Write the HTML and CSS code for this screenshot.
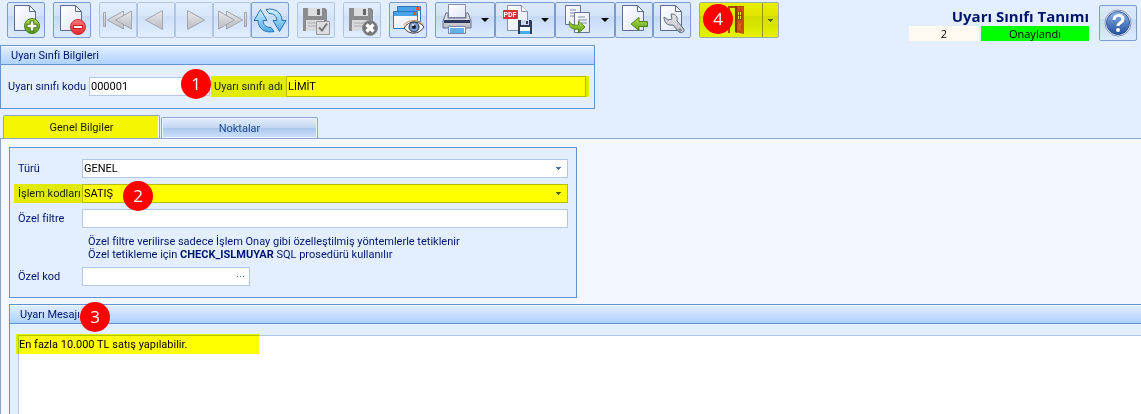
FILE: index.html
```html
<!DOCTYPE html>
<html lang="tr">
<head>
    <meta charset="UTF-8">
    <meta name="viewport" content="width=device-width, initial-scale=1.0">
    <title>Uyarı Sınıfı Tanımı</title>
    <link rel="stylesheet" href="styles.css">
</head>
<body>
    <!-- shared gradients and icon parts -->
    <svg class="defs" width="0" height="0" aria-hidden="true">
        <defs>
            <linearGradient id="paper" x1="0" y1="0" x2="1" y2="1"><stop offset="0" stop-color="#fff"/><stop offset="1" stop-color="#dfe6f6"/></linearGradient>
            <linearGradient id="green" x1="0" y1="0" x2="0" y2="1"><stop offset="0" stop-color="#b5e04a"/><stop offset="1" stop-color="#5b9a1c"/></linearGradient>
            <linearGradient id="red" x1="0" y1="0" x2="0" y2="1"><stop offset="0" stop-color="#ff7a7a"/><stop offset="1" stop-color="#e3262b"/></linearGradient>
            <linearGradient id="blue" x1="0" y1="0" x2="0" y2="1"><stop offset="0" stop-color="#d4f1ff"/><stop offset="1" stop-color="#4fabe6"/></linearGradient>
            <linearGradient id="grey" x1="0" y1="0" x2="0" y2="1"><stop offset="0" stop-color="#e8e9eb"/><stop offset="1" stop-color="#b9bcc2"/></linearGradient>
            <linearGradient id="navy" x1="0" y1="0" x2="0" y2="1"><stop offset="0" stop-color="#8fb4ea"/><stop offset="1" stop-color="#214f9e"/></linearGradient>
            <g id="page"><path d="M6.500 2.500h15l6 6v19h-21z" fill="url(#paper)" stroke="#5d6a92"/><path d="M21.500 2.500v6h6z" fill="#fff" stroke="#5d6a92"/></g>
            <g id="floppy"><path d="M5 5h22l2 2v21H5z" fill="#8b8c90"/><path d="M10 5h14v8H10z" fill="#dcdde0"/><path d="M19 6h3v6h-3z" fill="#66676b"/><path d="M8 17h18v11H8z" fill="#d9dadd"/><path d="M10 20h14M10 23h14" stroke="#aaacb0"/></g>
        </defs>
    </svg>

    <header class="toolbar">
        <div class="group">
            <button class="tool" aria-label="Yeni"><svg viewBox="0 0 36 34"><use href="#page"/><circle cx="24" cy="23" r="7.500" fill="url(#green)" stroke="#47791a"/><path d="M24 17.500v11M18.500 23h11" stroke="#3f7418" stroke-width="4.500"/><path d="M24 18.500v9M19.500 23h9" stroke="#fff" stroke-width="2.500"/></svg></button>
        </div>
        <div class="group">
            <button class="tool" aria-label="Sil"><svg viewBox="0 0 36 34"><use href="#page"/><circle cx="24" cy="24" r="7.500" fill="url(#red)" stroke="#c42d32"/><rect x="19.500" y="22.500" width="9" height="3" fill="#fff" stroke="#bd1f25"/></svg></button>
        </div>
        <div class="group">
            <button class="tool" disabled aria-label="İlk kayıt"><svg viewBox="0 0 36 34" fill="url(#grey)" stroke="#a2a6ad"><path d="M3.500 9.500h2v14h-2z"/><path d="M23.500 8v18l-16-9z"/><path d="M31.500 8v18l-16-9z"/></svg></button>
            <button class="tool" disabled aria-label="Önceki"><svg viewBox="0 0 36 34"><path d="M24.500 7.500v19l-17-9.500z" fill="url(#grey)" stroke="#a2a6ad"/></svg></button>
            <button class="tool" disabled aria-label="Sonraki"><svg viewBox="0 0 36 34"><path d="M11.500 7.500v19l17-9.500z" fill="url(#grey)" stroke="#a2a6ad"/></svg></button>
            <button class="tool" disabled aria-label="Son kayıt"><svg viewBox="0 0 36 34" fill="url(#grey)" stroke="#a2a6ad"><path d="M30.500 9.500h2v14h-2z"/><path d="M12.500 8v18l16-9z"/><path d="M4.500 8v18l16-9z"/></svg></button>
            <button class="tool" aria-label="Yenile"><svg viewBox="0 0 36 34" fill="url(#blue)" stroke="#2874b4" stroke-linejoin="round"><path d="M8.500 6.500l6.500 11h-4c0 4 3 7 8 7l3 4c-9 2-16-3-16-11H2z"/><path d="M27.500 28.500l-6.500-11h4c0-4-3-7-8-7l-3-4c9-2 16 3 16 11h4z"/></svg></button>
        </div>
        <div class="group">
            <button class="tool" disabled aria-label="Onayla"><svg viewBox="0 0 36 34"><use href="#floppy"/><path d="M18.500 18.500h13v13h-13z" fill="#dcdde0" stroke="#94969b"/><path d="M21 24.500l3 3 5-7" fill="none" stroke="#777" stroke-width="2"/></svg></button>
        </div>
        <div class="group">
            <button class="tool" disabled aria-label="Onayı kaldır"><svg viewBox="0 0 36 34"><use href="#floppy"/><circle cx="26" cy="25" r="7.500" fill="#747579" stroke="#919398"/><path d="M22.500 21.500l7 7M29.500 21.500l-7 7" stroke="#fff" stroke-width="3.500"/></svg></button>
        </div>
        <div class="group">
            <button class="tool" aria-label="Görüntüle"><svg viewBox="0 0 36 34"><path d="M7.500 3.500h23v15h-23z" fill="#f7fbff" stroke="#2f77b9"/><path d="M8 4h22v4H8z" fill="#4aa2e7"/><path d="M26 4h3v3h-3z" fill="#e8573d"/><path d="M3.500 8.500h24v17h-24z" fill="url(#paper)" stroke="#2f77b9"/><path d="M4 9h23v4H4z" fill="#4aa2e7"/><path d="M23 9h3v3h-3z" fill="#e8573d"/><path d="M14 25c5-8 15-8 20-1-5 8-15 8-20 1z" fill="#fff" stroke="#4b3935"/><path d="M13.500 22c6-6 14-6 20 0" fill="none" stroke="#c98f5c"/><circle cx="24" cy="24" r="5" fill="#7d9cc8" stroke="#1c2f55"/><circle cx="24" cy="24" r="2" fill="#111c36"/><circle cx="23" cy="22" r="1" fill="#fff"/></svg></button>
        </div>
        <div class="group">
            <button class="tool wide" aria-label="Yazdır"><svg viewBox="0 0 36 34"><path d="M12.500 1.500h17v13h-17z" fill="url(#paper)" stroke="#858da9"/><path d="M10 10l-3 8v7h28v-7l-3-8h-2v5H12v-5z" fill="url(#grey)" stroke="#66708f"/><path d="M8 17h26v3H8z" fill="#2e3961"/><path d="M12.500 23.500h17v7h-17z" fill="#fff" stroke="#7688af"/><path d="M14 25h14v5H14z" fill="#5eb2ee"/></svg><svg class="caret" viewBox="0 0 8 4"><path d="M0 0h8L4 4z"/></svg></button>
            <button class="tool wide" aria-label="PDF kaydet"><svg viewBox="0 0 36 34"><path d="M11.500 2.500h14l6 6v19h-20z" fill="url(#paper)" stroke="#8790ac"/><path d="M25.500 2.500v6h6" fill="#fff" stroke="#8790ac"/><rect x="7" y="7" width="15" height="9" rx="1" fill="#d43238"/><text class="pdf" x="14" y="14" text-anchor="middle">PDF</text><path d="M22 17h13l1 1v13H22z" fill="#303b5d"/><path d="M25 17h8v5h-8z" fill="#cfd8eb"/><path d="M30 18h2v3h-2z" fill="#303b5d"/><path d="M24 24h10v6H24z" fill="#fff"/><path d="M24 28h10v3H24z" fill="#49a8e7"/></svg><svg class="caret" viewBox="0 0 8 4"><path d="M0 0h8L4 4z"/></svg></button>
            <button class="tool wide" aria-label="Kopyala"><svg viewBox="0 0 36 34"><path d="M9.500 2.500h15v19h-15z" fill="url(#paper)" stroke="#66719c"/><path d="M14 7h6M14 10h6M14 13h4" stroke="#7a89ad"/><path d="M18.500 9.500h15v20h-15z" fill="url(#paper)" stroke="#66719c"/><path d="M22 14h7M22 17h9M25 20h6" stroke="#7a89ad"/><path d="M13.500 18.500c2 4 6 4 9 3.500v-4l6.500 6-6.500 6v-4c-7 1-10-2-9-7.500z" fill="url(#green)" stroke="#4e861c"/></svg><svg class="caret" viewBox="0 0 8 4"><path d="M0 0h8L4 4z"/></svg></button>
            <button class="tool" aria-label="İçeri al"><svg viewBox="0 0 36 34"><use href="#page"/><path d="M15 21l8-6.500v4h8.500v5H23v4z" fill="url(#green)" stroke="#4e861c"/></svg></button>
            <button class="tool" aria-label="Ayarlar"><svg viewBox="0 0 36 34"><use href="#page"/><path d="M10 14l4 3 4-1-1-5c5 0 7 3 6 7l6 7c3 3-1 6-4 4l-6-7c-6 1-9-3-9-8z" fill="url(#grey)" stroke="#606980"/><circle cx="26" cy="27" r="1" fill="#fff" stroke="#606980"/></svg></button>
        </div>
        <div class="group exit">
            <button class="tool exit-main" aria-label="Çıkış"><svg viewBox="0 0 36 34"><path d="M15 3h16v2H17v25h-2z" fill="#a54b0a"/><path d="M22 3l9 1v27l-9-2z" fill="#c7500f"/><path d="M22 3h2v27l-2-1z" fill="#8d3507"/><path d="M24.500 8.500h4v8h-4z" fill="#e4dc20" stroke="#a63c08"/><path d="M26.500 8v9M24 12.500h5" stroke="#a63c08"/><path d="M25 20h3v7h-3z" fill="#d9631c"/></svg></button>
            <button class="tool exit-more" aria-label="Çıkış seçenekleri"><svg class="arrow" viewBox="0 0 5 3"><path d="M0 0h5v1H4v1H3v1H2V2H1V1H0z"/></svg></button>
            <span class="badge badge-exit">4</span>
        </div>
        <div class="title">
            <h1>Uyarı Sınıfı Tanımı</h1>
            <div class="status"><span class="count">2</span><span class="state">Onaylandı</span></div>
        </div>
        <button class="tool help" aria-label="Yardım"><svg viewBox="0 0 36 34"><circle cx="18" cy="17" r="13" fill="#fff" stroke="#8391ae"/><circle cx="18" cy="17" r="11.500" fill="url(#navy)" stroke="#315a9f"/><path d="M14 14c0-6 9-6 9-1 0 4-5 3.500-5 7" fill="none" stroke="#fff" stroke-width="3"/><circle cx="18" cy="24" r="2" fill="#fff"/></svg></button>
    </header>

    <main>
        <section class="panel info">
            <h2>Uyarı Sınfi Bilgileri</h2>
            <div class="info-row">
                <label for="code">Uyarı sınıfı kodu</label>
                <input class="code" id="code" type="text" value="000001">
                <div class="marked name">
                    <label for="name">Uyarı sınıfı adı</label>
                    <input id="name" type="text" value="LİMİT">
                </div>
                <span class="badge badge-name">1</span>
            </div>
        </section>

        <nav class="tabs" role="tablist">
            <button class="tab active" role="tab" aria-selected="true">Genel Bilgiler</button>
            <button class="tab" role="tab" aria-selected="false">Noktalar</button>
        </nav>

        <div class="content">
            <section class="panel general">
                <div class="row">
                    <label for="type">Türü</label>
                    <div class="field">
                        <select id="type"><option>GENEL</option></select>
                        <svg class="arrow" viewBox="0 0 5 3"><path d="M0 0h5v1H4v1H3v1H2V2H1V1H0z"/></svg>
                    </div>
                </div>
                <div class="row marked">
                    <label for="codes">İşlem kodları</label>
                    <div class="field">
                        <select id="codes"><option>SATIŞ</option></select>
                        <svg class="arrow" viewBox="0 0 5 3"><path d="M0 0h5v1H4v1H3v1H2V2H1V1H0z"/></svg>
                    </div>
                    <span class="badge badge-codes">2</span>
                </div>
                <div class="row">
                    <label for="filter">Özel filtre</label>
                    <div class="field"><input id="filter" type="text"></div>
                </div>
                <p class="hint">Özel filtre verilirse sadece İşlem Onay gibi özelleştilmiş yöntemlerle tetiklenir<br>Özel tetikleme için <b>CHECK_ISLMUYAR</b> SQL prosedürü kullanılır</p>
                <div class="row">
                    <label for="special">Özel kod</label>
                    <div class="field short">
                        <input id="special" type="text">
                        <button class="dots" aria-label="Seç"><svg viewBox="0 0 7 1"><path d="M0 0h1v1H0zM3 0h1v1H3zM6 0h1v1H6z"/></svg></button>
                    </div>
                </div>
            </section>

            <section class="panel message">
                <h2>Uyarı Mesajı</h2>
                <span class="badge badge-message">3</span>
                <div class="message-body">
                    <textarea aria-label="Uyarı Mesajı">En fazla 10.000 TL satış yapılabilir.</textarea>
                    <span class="marker"></span>
                </div>
            </section>
        </div>
    </main>
</body>
</html>
```
FILE: styles.css
```css
* {
    margin: 0;
    padding: 0;
    box-sizing: border-box;
}

body {
    display: flex;
    flex-direction: column;
    min-height: 100vh;
    background-color: #e3eeff;
    color: #00146e;
    font-family: Tahoma, Roboto, sans-serif;
    font-size: 11px;
    line-height: 13px;
    overflow-x: hidden;
}

button, input, select, textarea {
    font: inherit;
    color: #000;
}

.defs {
    position: absolute;
}

/* toolbar */
.toolbar {
    display: flex;
    align-items: flex-start;
    gap: 8px;
    height: 45px;
    padding: 2px 4px 0 7px;
}

.group {
    display: flex;
    flex: none;
}

.tool {
    display: flex;
    align-items: center;
    width: 38px;
    height: 36px;
    border: 1px solid #7b9cce;
    border-radius: 2px;
    background: linear-gradient(#dce9fb, #d5e3f8 38%, #c5d9f5 39%, #dcebff);
}

.tool > svg {
    flex: none;
    width: 36px;
    height: 34px;
}

.tool:disabled {
    border-color: #b2c6e4;
    background: linear-gradient(#e1edff, #d9e7fb 38%, #cfe0f9 39%, #e1edff);
}

.tool.wide {
    width: 60px;
}

.tool > .caret {
    width: 8px;
    height: 4px;
    margin-left: 9px;
}

.pdf {
    fill: #fff;
    font-size: 7px;
    font-weight: bold;
}

.exit {
    position: relative;
    border: 1px solid #9aaf9a;
    border-radius: 2px;
}

.exit .tool {
    height: 34px;
    border: 0;
    border-radius: 0;
    background: linear-gradient(#eaf000, #dfe600 38%, #d2dc00 39%, #e6f200);
}

.exit .exit-main {
    width: 62px;
    padding-left: 13px;
}

.exit .exit-more {
    justify-content: center;
    width: 16px;
    border-left: 1px solid #8c9a00;
}

.tool > .arrow {
    width: 5px;
    height: 3px;
    fill: #4c6600;
}

.title {
    margin: 4px 2px 0 auto;
    text-align: right;
}

.title h1 {
    font-family: "Open Sans", sans-serif;
    font-size: 15px;
    line-height: 20px;
    white-space: nowrap;
}

.status {
    display: flex;
    gap: 2px;
    color: #000;
    font-family: "Open Sans", sans-serif;
    font-size: 11px;
    line-height: 15px;
    text-align: center;
}

.count {
    width: 70px;
    background-color: #fffaf0;
}

.state {
    width: 108px;
    background-color: #00ff00;
}

.help {
    flex: none;
    margin-top: 3px;
}

/* panels */
main {
    display: flex;
    flex: 1;
    flex-direction: column;
}

.panel {
    position: relative;
    border: 1px solid #6593cf;
    background-color: #e3eeff;
}

.panel h2 {
    height: 19px;
    padding: 0 10px;
    border-top: 1px solid #fff;
    border-bottom: 1px solid #6593cf;
    background: linear-gradient(#e0edff, #afd2ff);
    font-size: 11px;
    font-weight: normal;
    line-height: 17px;
}

.info {
    width: 595px;
    max-width: 100%;
    height: 64px;
}

.info-row {
    display: flex;
    align-items: center;
    position: relative;
    padding: 11px 5px 0 7px;
}

.info-row > label {
    width: 81px;
    white-space: nowrap;
}

input, select {
    width: 100%;
    height: 19px;
    padding: 0 1px;
    border: 1px solid #b3c8e8;
    border-radius: 0;
    background-color: #fff;
    appearance: none;
}

.info-row .code {
    width: 121px;
}

.marked {
    background-color: #e1eb00;
}

.marked input, .marked select {
    border-color: #b5bf00;
    background-color: #ffff00;
}

.marked label {
    color: #1a2600;
}

.name {
    display: flex;
    flex: 1;
    align-items: center;
    height: 21px;
    margin-left: 1px;
    padding: 0 3px;
}

.name label {
    flex: none;
    width: 72px;
    white-space: nowrap;
}

.name input {
    height: 21px;
}

.badge {
    position: absolute;
    z-index: 1;
    width: 30px;
    height: 30px;
    border-radius: 50%;
    background-color: #ff0000;
    color: #fff;
    font-family: "Open Sans", sans-serif;
    font-size: 17px;
    line-height: 30px;
    text-align: center;
}

.badge-exit {
    left: 3px;
    top: 1px;
}

.badge-name {
    left: 180px;
    top: 4px;
}

.badge-codes {
    left: 109px;
    top: -3px;
}

.badge-message {
    left: 70px;
    top: -3px;
}

/* tabs */
.tabs {
    display: flex;
    align-items: flex-end;
    gap: 1px;
    height: 29px;
    padding: 0 3px;
}

.tab {
    width: 157px;
    height: 21px;
    border: 1px solid #8ea4cc;
    border-bottom: 0;
    border-radius: 2px 2px 0 0;
    background: linear-gradient(#e4eefb, #c3d7f2 48%, #a9c7ee 50%, #cfe2fb);
    box-shadow: inset 0 0 0 1px #edf4ff;
    color: #1f4a8f;
}

.tab.active {
    height: 23px;
    background: #f5f700;
    box-shadow: inset -1px 0 0 #fff;
    color: #1a1a00;
}

.content {
    display: flex;
    flex: 1;
    flex-direction: column;
    gap: 6px;
    padding: 8px 0 0 8px;
    border-top: 1px solid #8ea4cc;
    border-left: 1px solid #8ea4cc;
    background-color: #f3f7ff;
}

.general {
    display: flex;
    flex-direction: column;
    gap: 6px;
    width: 568px;
    max-width: 100%;
    height: 151px;
    padding: 11px 8px 0 4px;
}

.row {
    display: flex;
    align-items: center;
    position: relative;
    height: 19px;
    padding-left: 4px;
}

.row label {
    flex: none;
    width: 64px;
    white-space: nowrap;
}

.field {
    position: relative;
    flex: 1;
}

.field select, .field input {
    display: block;
}

.field.short {
    flex: none;
    width: 168px;
}

.field .arrow {
    position: absolute;
    top: 8px;
    right: 7px;
    width: 5px;
    height: 3px;
    fill: #4a72ad;
}

.marked .arrow {
    fill: #4c6600;
}

.dots {
    display: flex;
    align-items: center;
    justify-content: center;
    position: absolute;
    top: 1px;
    right: 1px;
    width: 17px;
    height: 17px;
    border: 0;
    background: none;
}

.dots svg {
    width: 7px;
    height: 1px;
    fill: #4a72ad;
}

.hint {
    padding: 1px 0 0 74px;
    white-space: nowrap;
}

.message {
    display: flex;
    flex: 1;
    flex-direction: column;
    min-height: 110px;
    border-right: 0;
    border-bottom: 0;
}

.message-body {
    display: flex;
    flex: 1;
    position: relative;
    padding: 11px 0 0 8px;
}

textarea {
    flex: 1;
    padding: 2px 0;
    border: 1px solid #b3c8e8;
    border-right: 0;
    border-bottom: 0;
    background-color: #fff;
    resize: none;
}

/* highlighter stroke over the message text */
.marker {
    position: absolute;
    top: 10px;
    left: 6px;
    width: 243px;
    height: 20px;
    background-color: #ffff00;
    mix-blend-mode: multiply;
    pointer-events: none;
}
```
